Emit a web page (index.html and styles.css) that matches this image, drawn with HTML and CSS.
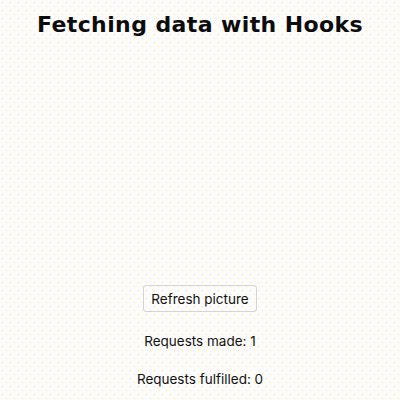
FILE: index.html
```html
<!DOCTYPE html>
<html lang="en">
<head>
  <meta charset="UTF-8" />
  <title>Fetching data with Hooks</title>
  <link rel="stylesheet" href="styles.css">
</head>
<body>
  <div class="app">
    <h1>Fetching data with Hooks</h1>
    <div class="picture"></div>
    <button class="refresh">Refresh picture</button>
    <p class="count">Requests made: 1</p>
    <p class="count">Requests fulfilled: 0</p>
  </div>
</body>
</html>
```

FILE: styles.css
```css
body {
  margin: 0;
  font-family: Inter, "Liberation Sans", sans-serif;
  color: #111;
  background-color: #fcfcff;
  background-image:
    radial-gradient(circle at 2.5px 2.5px, #fff150 0.6px, transparent 0.9px),
    radial-gradient(circle at 6.5px 6.5px, #fff150 0.6px, transparent 0.9px);
  background-size: 8px 8px;
  min-height: 400px;
}
.app { display: flex; flex-direction: column; align-items: center; }
h1 {
  font-family: "DejaVu Sans", sans-serif;
  font-size: 22px;
  font-weight: 700;
  letter-spacing: 0.4px;
  margin: 12px 0 0;
  color: #0c0c0c;
}
.picture { height: 248px; }
.refresh {
  font-family: inherit;
  font-size: 13.5px;
  color: #111;
  background: transparent;
  border: 1px solid #d4d4d8;
  border-radius: 3px;
  padding: 5px 7px 4px;
}
.count { font-size: 13.5px; margin: 21px 0 0; }
.count + .count { margin-top: 22px; }
```
